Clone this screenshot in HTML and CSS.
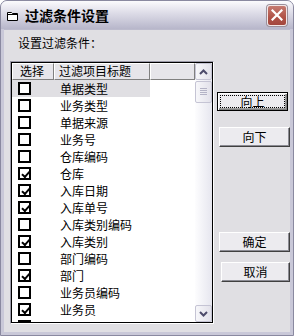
FILE: index.html
```html
<!DOCTYPE html>
<html>
<head>
<meta charset="utf-8">
<link rel="stylesheet" href="styles.css">
</head>
<body>
<div class="window">
  <div class="titlebar">
    <svg class="ticon" width="11" height="9" viewBox="0 0 11 9">
      <path d="M0.5 0.5 H4.5 L5.5 1.5 H10.5 V8.5 H0.5 Z" fill="#fff" stroke="#000"/>
      <path d="M0.5 2.5 H10.5" stroke="#000"/>
    </svg>
    <span class="title">过滤条件设置</span>
    <div class="close">
      <svg width="12" height="12" viewBox="0 0 12 12">
        <path d="M1.5 1.5 L10.5 10.5 M10.5 1.5 L1.5 10.5" stroke="#fff" stroke-width="2.2" stroke-linecap="square"/>
      </svg>
    </div>
  </div>
  <div class="client">
    <div class="label">设置过滤条件：</div>
    <div class="main">
      <div class="listbox">
        <div class="listarea">
          <div class="header">
            <div class="hc c1">选择</div>
            <div class="hc c2">过滤项目标题</div>
            <div class="hc c3"></div>
          </div>
          <div class="rows">
            <div class="row sel"><span class="cb"></span><span class="txt">单据类型</span></div>
            <div class="row"><span class="cb"></span><span class="txt">业务类型</span></div>
            <div class="row"><span class="cb"></span><span class="txt">单据来源</span></div>
            <div class="row"><span class="cb"></span><span class="txt">业务号</span></div>
            <div class="row"><span class="cb"></span><span class="txt">仓库编码</span></div>
            <div class="row"><span class="cb on"></span><span class="txt">仓库</span></div>
            <div class="row"><span class="cb on"></span><span class="txt">入库日期</span></div>
            <div class="row"><span class="cb on"></span><span class="txt">入库单号</span></div>
            <div class="row"><span class="cb"></span><span class="txt">入库类别编码</span></div>
            <div class="row"><span class="cb on"></span><span class="txt">入库类别</span></div>
            <div class="row"><span class="cb"></span><span class="txt">部门编码</span></div>
            <div class="row"><span class="cb on"></span><span class="txt">部门</span></div>
            <div class="row"><span class="cb"></span><span class="txt">业务员编码</span></div>
            <div class="row"><span class="cb on"></span><span class="txt">业务员</span></div>
            <div class="row"><span class="cb"></span></div>
          </div>
        </div>
        <div class="scrollbar">
          <div class="sbtn">
            <svg width="9" height="6" viewBox="0 0 9 6"><path d="M1 5 L4.5 1.5 L8 5" fill="none" stroke="#4d4b6b" stroke-width="2"/></svg>
          </div>
          <div class="thumb">
            <svg width="7" height="8" viewBox="0 0 7 8"><path d="M0 0.5 H7 M0 2.5 H7 M0 4.5 H7 M0 6.5 H7" stroke="#b4b3c6"/></svg>
          </div>
          <div class="track"></div>
          <div class="sbtn">
            <svg width="9" height="6" viewBox="0 0 9 6"><path d="M1 1 L4.5 4.5 L8 1" fill="none" stroke="#4d4b6b" stroke-width="2"/></svg>
          </div>
        </div>
      </div>
      <div class="buttons">
        <div class="btn focus up"><span class="focusrect">向上</span></div>
        <div class="btn down">向下</div>
        <div class="spacer"></div>
        <div class="btn ok">确定</div>
        <div class="btn cancel">取消</div>
      </div>
    </div>
  </div>
</div>
</body>
</html>
```

FILE: styles.css
```css
* { box-sizing: border-box; }
html, body { margin: 0; padding: 0; background: #fff; }
body {
  font-family: "Noto Sans CJK SC", "Noto Sans", sans-serif;
  font-size: 12px;
  color: #000;
}
.window {
  width: 294px;
  height: 336px;
  display: flex;
  flex-direction: column;
  border: 1px solid #8a89a0;
  border-radius: 7px 7px 0 0;
  background: #c9c8d8;
  overflow: hidden;
}
.titlebar {
  height: 28px;
  flex: none;
  display: flex;
  align-items: center;
  padding-left: 6px;
  background: linear-gradient(#fbfbfd 0%, #e6e5ee 30%, #d2d1df 60%, #b7b6ca 100%);
}
.ticon { margin-top: 2px; }
.title {
  margin-left: 7px;
  font-weight: bold;
  font-size: 14px;
  line-height: 16px;
}
.close {
  margin-left: auto;
  margin-right: 6px;
  width: 20px;
  height: 21px;
  border: 1px solid #f2e6e6;
  border-radius: 3px;
  background: linear-gradient(#c57a70, #b05247 60%, #a3463d);
  display: flex;
  align-items: center;
  justify-content: center;
  box-shadow: 0 0 0 1px #9a8f9a;
}
.client {
  flex: 1;
  margin: 0 3px 3px 3px;
  background: #e0dfe3;
  display: flex;
  flex-direction: column;
  border-top: 1px solid #bcbbcd;
}
.label {
  margin: 6px 0 0 14px;
  line-height: 14px;
  height: 14px;
}
.main {
  display: flex;
  margin-top: 11px;
  margin-left: 6px;
}
.listbox {
  width: 204px;
  height: 263px;
  display: flex;
  border-top: 1px solid #9a99a8;
  border-left: 1px solid #9a99a8;
  border-right: 1px solid #ffffff;
  border-bottom: 1px solid #ffffff;
  box-shadow: inset 1px 1px 0 #000, inset -1px -1px 0 #000;
  padding: 1px;
  background: #fff;
}
.listarea {
  flex: 1;
  overflow: hidden;
  display: flex;
  flex-direction: column;
}
.header {
  display: flex;
  height: 17px;
  flex: none;
}
.hc {
  background: #e6e5ea;
  border-top: 1px solid #fff;
  border-left: 1px solid #fff;
  border-right: 1px solid #808080;
  border-bottom: 1px solid #808080;
  line-height: 14px;
  white-space: nowrap;
}
.c1 { width: 42px; padding-left: 7px; }
.c2 { width: 96px; padding-left: 4px; }
.c3 { flex: 1; }
.rows { flex: 1; overflow: hidden; }
.row {
  height: 17px;
  display: flex;
  align-items: center;
  width: 138px;
}
.row.sel { background: #e0dfe3; }
.cb {
  width: 13px;
  height: 13px;
  margin-left: 6px;
  border: 2px solid #000;
  background: #fff;
  flex: none;
  position: relative;
}
.cb.on::after {
  content: "";
  position: absolute;
  left: 1px;
  top: 0px;
  width: 6px;
  height: 3px;
  border-left: 2px solid #000;
  border-bottom: 2px solid #000;
  transform: rotate(-48deg) translate(-1px, 2px);
}
.txt {
  margin-left: 29px;
  white-space: nowrap;
  line-height: 14px;
}
.scrollbar {
  width: 17px;
  flex: none;
  display: flex;
  flex-direction: column;
  background: linear-gradient(90deg, #fdfdfe, #e6e6ef);
}
.sbtn, .thumb {
  height: 17px;
  flex: none;
  border: 1px solid #c5c4d4;
  border-radius: 2px;
  background: linear-gradient(90deg, #f7f7fa, #e2e1ea);
  display: flex;
  align-items: center;
  justify-content: center;
}
.thumb {
  height: 22px;
  margin-top: 1px;
}
.track { flex: 1; }
.buttons {
  margin-left: 3px;
  display: flex;
  flex-direction: column;
  padding-top: 31px;
}
.btn {
  width: 71px;
  height: 20px;
  background: #ecebef;
  border-top: 1px solid #ffffff;
  border-left: 1px solid #ffffff;
  border-right: 1px solid #404040;
  border-bottom: 1px solid #404040;
  box-shadow: inset -1px -1px 0 #8c8c94;
  display: flex;
  align-items: center;
  justify-content: center;
  line-height: 14px;
}
.btn.focus {
  height: 19px;
  border: 1px solid #000;
  box-shadow: inset 1px 1px 0 #fff, inset -1px -1px 0 #808080, inset -2px -2px 0 #a0a0a0;
  padding: 2px;
}
.focusrect {
  flex: 1;
  align-self: stretch;
  border: 1px dotted #000;
  display: flex;
  align-items: center;
  justify-content: center;
}
.down { margin-top: 16px; margin-left: 2px; }
.spacer { height: 85px; flex: none; }
.ok { margin-left: 2px; }
.cancel { margin-top: 10px; margin-left: 4px; width: 69px; }
```
